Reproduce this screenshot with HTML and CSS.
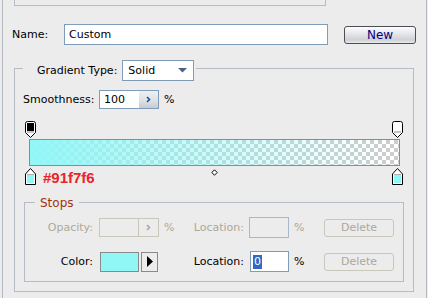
FILE: index.html
```html
<!DOCTYPE html>
<html lang="en">
<head>
  <meta charset="UTF-8" />
  <title>Gradient Editor</title>
  <link rel="stylesheet" href="styles.css">
</head>
<body>
  <div class="page">
    <div class="top-frame"></div>

    <div class="name-row">
      <span class="name-label">Name:</span>
      <div class="field name-field">Custom</div>
      <button class="btn btn-new">New</button>
    </div>

    <div class="group gradient-group">
      <div class="group-head type-head">
        <span>Gradient Type:</span>
        <div class="select">
          <span>Solid</span>
          <svg width="9" height="5" viewBox="0 0 9 5"><path d="M0 0h9L4.5 4.5z" fill="#4d6185"/></svg>
        </div>
      </div>

      <div class="smooth-row">
        <span class="smooth-label">Smoothness:</span>
        <div class="field spin">
          <span class="spin-value">100</span>
          <span class="spin-btn">
            <svg width="5" height="7" viewBox="0 0 5 7"><path d="M1 1l2.5 2.5L1 6" fill="none" stroke="#1f4fa8" stroke-width="1.6"/></svg>
          </span>
        </div>
        <span class="unit">%</span>
      </div>

      <div class="editor">
        <div class="stop-row top-stops">
          <svg width="11" height="17" viewBox="0 0 11 17">
            <path d="M0.5 2.5q0-2 2-2h6q2 0 2 2v9l-5 5-5-5z" fill="#fff" stroke="#000"/>
            <rect x="2" y="2" width="7" height="8" fill="#000"/>
            <rect x="2" y="10" width="7" height="2" fill="#c4c4c4"/>
          </svg>
          <svg width="11" height="17" viewBox="0 0 11 17">
            <path d="M0.5 2.5q0-2 2-2h6q2 0 2 2v9l-5 5-5-5z" fill="#fff" stroke="#000"/>
            <rect x="2" y="10" width="7" height="2" fill="#c4c4c4"/>
          </svg>
        </div>

        <div class="bar"></div>

        <div class="stop-row bottom-stops">
          <div class="stop-left">
            <svg width="11" height="17" viewBox="0 0 11 17">
              <path d="M0.5 16.5V6L5.5 0.5 10.5 6v10.5z" fill="#fff" stroke="#000"/>
              <rect x="2" y="6" width="7" height="1" fill="#b0b0b0"/>
              <rect x="2" y="7" width="7" height="8" fill="#91f7f6"/>
            </svg>
            <span class="hex">#91f7f6</span>
          </div>
          <svg class="midpoint" width="7" height="7" viewBox="0 0 7 7"><path d="M3.5 0.8l2.7 2.7-2.7 2.7-2.7-2.7z" fill="#fff" stroke="#000"/></svg>
          <div class="stop-right">
            <svg width="11" height="17" viewBox="0 0 11 17">
              <path d="M0.5 16.5V6L5.5 0.5 10.5 6v10.5z" fill="#fff" stroke="#000"/>
              <rect x="2" y="6" width="7" height="1" fill="#b0b0b0"/>
              <rect x="2" y="7" width="7" height="8" fill="#91f7f6"/>
            </svg>
          </div>
        </div>
      </div>

      <div class="group stops-group">
        <div class="group-head stops-head">Stops</div>
        <div class="stops-grid">
          <span class="lbl off">Opacity:</span>
          <div class="cell">
            <div class="field spin off">
              <span class="spin-value"></span>
              <span class="spin-btn">
                <svg width="5" height="7" viewBox="0 0 5 7"><path d="M1 1l2.5 2.5L1 6" fill="none" stroke="#a9a9a9" stroke-width="1.6"/></svg>
              </span>
            </div>
          </div>
          <span class="unit off">%</span>
          <span class="lbl off">Location:</span>
          <div class="cell"><div class="field loc off"></div></div>
          <span class="unit off">%</span>
          <button class="btn btn-del" disabled>Delete</button>

          <span class="lbl">Color:</span>
          <div class="cell">
            <div class="swatch"></div>
            <div class="pick">
              <svg width="6" height="11" viewBox="0 0 6 11"><path d="M0 0l6 5.5L0 11z" fill="#000"/></svg>
            </div>
          </div>
          <span></span>
          <span class="lbl">Location:</span>
          <div class="cell"><div class="field loc"><span class="sel">0</span></div></div>
          <span class="unit">%</span>
          <button class="btn btn-del" disabled>Delete</button>
        </div>
      </div>
    </div>
  </div>
</body>
</html>
```

FILE: styles.css
```css
body {
  margin: 0;
  padding-left: 2px;
  background: #ececec;
  font-family: "DejaVu Sans", sans-serif;
  font-size: 11px;
  color: #000;
  overflow: hidden;
}
.page {
  height: 298px;
  margin-right: 1px;
  border-left: 1px solid #b4b9c2;
  border-right: 1px solid #b4b9c2;
}
.top-frame {
  width: 310px;
  height: 5px;
  margin-left: 11px;
  border: 1px solid #b6bcc6;
  border-top: none;
}
.name-row {
  display: flex;
  align-items: center;
  margin-top: 18px;
  padding-left: 9px;
  height: 21px;
}
.name-label {
  width: 52px;
}
.field {
  box-sizing: border-box;
  border: 1px solid #7f9db9;
  background: #fff;
  display: flex;
  align-items: center;
}
.name-field {
  width: 264px;
  height: 21px;
  padding-left: 4px;
}
.btn {
  box-sizing: border-box;
  font-family: "DejaVu Sans", sans-serif;
  font-size: 11px;
  padding: 0;
  border-radius: 3px;
}
.btn-new {
  width: 72px;
  height: 18px;
  margin-left: 16px;
  border: 1px solid #4b4f55;
  color: #000080;
  font-size: 12px;
  background: linear-gradient(#fdfdfd, #e4e5e8 45%, #cfd1d5 80%, #e9eaec);
}
.group {
  border: 1px solid #b6bcc6;
}
.gradient-group {
  width: 398px;
  height: 222px;
  margin: 23px 0 0 11px;
}
.group-head {
  display: flex;
  align-items: center;
  width: fit-content;
  background: #ececec;
}
.type-head {
  margin: -9px 0 0 8px;
  padding: 0 2px 0 14px;
  gap: 5px;
}
.select {
  box-sizing: border-box;
  width: 72px;
  height: 21px;
  border: 1px solid #7f9db9;
  background: #fff;
  display: flex;
  align-items: center;
  justify-content: space-between;
  padding: 0 6px 0 5px;
}
.smooth-row {
  display: flex;
  align-items: center;
  margin-top: 9px;
  padding-left: 8px;
  height: 19px;
}
.smooth-label {
  width: 76px;
}
.spin {
  width: 60px;
  height: 19px;
}
.spin-value {
  flex: 1;
  padding-left: 4px;
}
.spin-btn {
  width: 19px;
  height: 17px;
  display: flex;
  align-items: center;
  justify-content: center;
  background: linear-gradient(#eef0f3, #dcdfe4 60%, #c7cbd1);
}
.unit {
  padding-left: 5px;
}
.editor {
  margin: 12px 0 0 10px;
  width: 378px;
}
.stop-row {
  display: flex;
  justify-content: space-between;
}
.top-stops svg,
.bottom-stops svg {
  display: block;
}
.bar {
  box-sizing: border-box;
  width: 371px;
  height: 27px;
  margin: 1px 0 0 4px;
  border: 1px solid #8c8c8c;
  background:
    linear-gradient(90deg, rgba(145, 247, 246, 1), rgba(145, 247, 246, 0.6) 35%, rgba(145, 247, 246, 0) 97%),
    repeating-conic-gradient(#cdcdcd 0 25%, #fff 0 50%) 0 0 / 8px 8px;
}
.bottom-stops {
  display: grid;
  grid-template-columns: 1fr auto 1fr;
  margin-top: 2px;
}
.stop-left {
  display: flex;
  align-items: flex-end;
}
.hex {
  margin-left: 7px;
  font-family: "Liberation Sans", sans-serif;
  font-weight: bold;
  font-size: 15px;
  line-height: 15px;
  color: #e8252a;
}
.bottom-stops .midpoint {
  margin-top: 1px;
}
.stop-right {
  display: flex;
  justify-content: flex-end;
}
.stops-group {
  width: 378px;
  margin: 17px 0 0 9px;
  padding: 0 0 9px;
}
.stops-head {
  margin: -8px 0 0 10px;
  padding: 0 5px;
  color: #a0300e;
  font-size: 12px;
  height: 15px;
}
.stops-grid {
  display: grid;
  grid-template-columns: 68px 66px 21px 64px 45px 35px 70px;
  grid-auto-rows: 21px;
  row-gap: 13px;
  align-items: center;
  margin-top: 7px;
}
.lbl {
  text-align: right;
}
.off {
  color: #aca899;
}
.cell {
  display: flex;
  align-items: center;
  padding-left: 6px;
}
.stops-grid .cell:nth-child(5),
.stops-grid .cell:nth-child(16) {
  padding-left: 5px;
}
.field.off {
  background: #ececec;
  border-color: #c9c7ba;
}
.spin.off .spin-btn {
  background: #ececec;
  border-left: 1px solid #c9c7ba;
}
.field.loc.off {
  border-color: #a9b8c8;
}
.loc {
  width: 40px;
  height: 21px;
  padding-left: 2px;
}
.sel {
  background: #316ac5;
  color: #fff;
  padding: 0 1px;
  line-height: 14px;
}
.swatch {
  box-sizing: border-box;
  width: 39px;
  height: 20px;
  margin-left: 1px;
  border: 1px solid #8a8a8a;
  background: #91f7f6;
}
.pick {
  box-sizing: border-box;
  width: 17px;
  height: 20px;
  margin-left: 2px;
  border: 1px solid #8a8a8a;
  display: flex;
  align-items: center;
  justify-content: center;
}
.btn-del {
  width: 70px;
  height: 18px;
  border: 1px solid #c9c7ba;
  background: #ececec;
  color: #aca899;
}
```
